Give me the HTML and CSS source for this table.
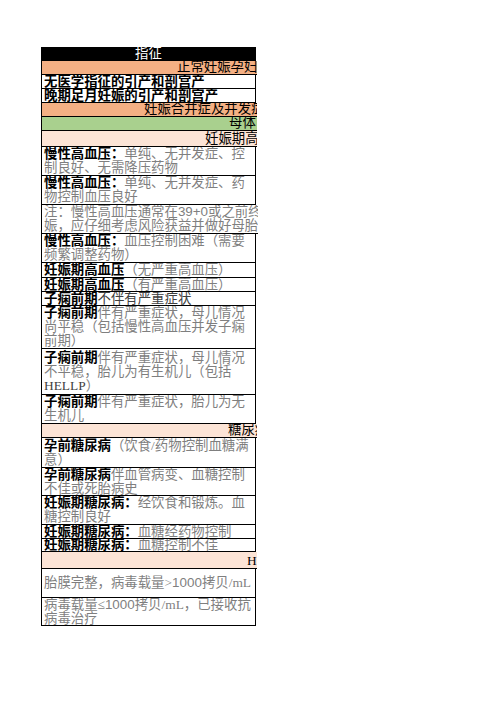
FILE: index.html
```html
<!DOCTYPE html>
<html lang="zh">
<head>
<meta charset="utf-8">
<link rel="stylesheet" href="styles.css">
</head>
<body>
<div class="sheet">
  <div class="row hdr r14">指征</div>
  <div class="row grp salmon r14"><span class="gp1">正常妊娠孕妇</span></div>
  <div class="row cell r14"><div class="t"><b>无医学指征的引产和剖宫产</b></div></div>
  <div class="row cell r14"><div class="t"><b>晚期足月妊娠的引产和剖宫产</b></div></div>
  <div class="row grp salmon r14"><span class="gp2">妊娠合并症及并发症</span></div>
  <div class="row grp green r14"><span class="gp3">母体</span></div>
  <div class="row grp peach r16"><span class="gp4">妊娠期高血压疾病</span></div>
  <div class="row cell r29"><div class="t"><b>慢性高血压：</b><span class="g">单纯、无并发症、控<br>制良好、无需降压药物</span></div></div>
  <div class="row cell r29"><div class="t"><b>慢性高血压：</b><span class="g">单纯、无并发症、药<br>物控制血压良好</span></div></div>
  <div class="row cell open r29"><div class="t"><span class="g">注：慢性高血压通常在<span class="num">39+0</span>或之前终止妊<br>娠，应仔细考虑风险获益并做好母胎监护</span></div></div>
  <div class="row cell r29"><div class="t"><b>慢性高血压：</b><span class="g">血压控制困难（需要<br>频繁调整药物）</span></div></div>
  <div class="row cell r15"><div class="t"><b>妊娠期高血压</b><span class="g">（无严重高血压）</span></div></div>
  <div class="row cell r14"><div class="t"><b>妊娠期高血压</b><span class="g">（有严重高血压）</span></div></div>
  <div class="row cell r14"><div class="t"><b>子痫前期</b><span class="d">不伴有严重症状</span></div></div>
  <div class="row cell r43"><div class="t"><b>子痫前期</b><span class="g">伴有严重症状，母儿情况<br>尚平稳（包括慢性高血压并发子痫<br>前期）</span></div></div>
  <div class="row cell r46"><div class="t"><b>子痫前期</b><span class="g">伴有严重症状，母儿情况<br>不平稳，胎儿为有生机儿（包括<br></span><span class="d">HELLP</span><span class="g">）</span></div></div>
  <div class="row cell r29"><div class="t"><b>子痫前期</b><span class="g">伴有严重症状，胎儿为无<br>生机儿</span></div></div>
  <div class="row grp peach r14"><span class="gp5">糖尿病</span></div>
  <div class="row cell r30"><div class="t"><b>孕前糖尿病</b><span class="g">（饮食/药物控制血糖满<br>意）</span></div></div>
  <div class="row cell r28"><div class="t"><b>孕前糖尿病</b><span class="g">伴血管病变、血糖控制<br>不佳或死胎病史</span></div></div>
  <div class="row cell r29"><div class="t"><b>妊娠期糖尿病：</b><span class="g">经饮食和锻炼。血<br>糖控制良好</span></div></div>
  <div class="row cell r14"><div class="t"><b>妊娠期糖尿病：</b><span class="g">血糖经药物控制</span></div></div>
  <div class="row cell r13"><div class="t"><b>妊娠期糖尿病：</b><span class="g">血糖控制不佳</span></div></div>
  <div class="row grp peach r17"><span class="gp6">HIV</span></div>
  <div class="row cell r29"><div class="t"><span class="g">胎膜完整，病毒载量&gt;<span class="num">1000</span>拷贝/mL</span></div></div>
  <div class="row cell r28"><div class="t"><span class="g">病毒载量≤<span class="num">1000</span>拷贝/mL，已接收抗<br>病毒治疗</span></div></div>
</div>
</body>
</html>
```
FILE: styles.css
```css
html, body {
  margin: 0;
  padding: 0;
  background: #ffffff;
}
body {
  font-family: "Liberation Serif", "Noto Sans CJK SC", serif;
  font-size: 13.4px;
  color: #000;
}
.sheet {
  margin-top: 47px;
  margin-left: 41px;
  width: 215px;
  border-left: 1px solid #000;
  box-sizing: border-box;
  display: flex;
  flex-direction: column;
}
.row {
  box-sizing: border-box;
  border-bottom: 1px solid #000;
  line-height: 14px;
  white-space: nowrap;
  overflow: hidden;
}
.hdr {
  background: #000;
  color: #fff;
  text-align: center;
  line-height: 13px;
  margin-left: -1px;
}
.grp {
  margin-right: -1px;
  display: flex;
  align-items: flex-end;
}
.salmon { background: #f4b084; }
.green { background: #a9d08e; }
.peach { background: #fce4d6; }
.gp1 { padding-left: 135px; }
.gp2 { padding-left: 102px; }
.gp3 { padding-left: 187px; }
.gp4 { padding-left: 163px; }
.gp5 { padding-left: 186px; }
.gp6 { padding-left: 205px; }
.cell {
  border-right: 1px solid #000;
  display: flex;
  align-items: center;
  padding-left: 2px;
}
.cell.open {
  border-right: none;
  margin-right: -2px;
}
.t {
  line-height: 14px;
}
.t b {
  font-weight: 700;
  color: #000;
}
.g {
  color: #7f7f7f;
}
.d {
  color: #404040;
}
.num {
  font-family: "Liberation Sans", sans-serif;
}
.r13 { height: 13px; }
.r14 { height: 14px; }
.r15 { height: 15px; }
.r16 { height: 16px; }
.r17 { height: 17px; }
.r28 { height: 28px; }
.r29 { height: 29px; }
.r30 { height: 30px; }
.r43 { height: 43px; }
.r46 { height: 46px; }
```
